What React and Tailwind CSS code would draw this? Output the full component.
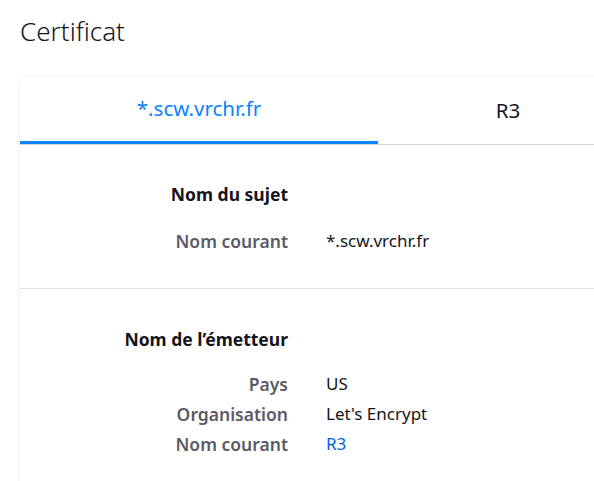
import React from "react";

const subject = [{ label: "Nom courant", value: "*.scw.vrchr.fr" }];

const issuer = [
  { label: "Pays", value: "US" },
  { label: "Organisation", value: "Let's Encrypt" },
  { label: "Nom courant", value: "R3", link: true },
];

export default function App() {
  return (
    <div
      className="w-[594px] h-[481px] overflow-hidden bg-white text-[#15141a]"
      style={{ fontFamily: '"Noto Sans", "Open Sans", sans-serif' }}
    >
      {/* TITLE */}
      <h1 className="pl-[20px] pt-[13px] text-[26px] font-light leading-[36px]">
        Certificat
      </h1>

      {/* CARD */}
      <div className="ml-[20px] mt-[28px] w-[618px] bg-white shadow-[0_0_6px_rgba(0,0,0,0.08)]">
        {/* TABS */}
        <div className="flex border-b border-[#cfcfd8]">
          <div className="w-[358px] h-[67px] flex items-center justify-center border-b-[3px] border-[#0a84ff] text-[20.5px] text-[#0a84ff] pb-[1px]">
            *.scw.vrchr.fr
          </div>
          <div className="flex-1 h-[67px] flex items-center justify-center text-[20.5px] pb-[1px]">
            R3
          </div>
        </div>

        <div className="pt-[37px] pb-[35px]">
          <Section title="Nom du sujet" rows={subject} gap="mt-[23px]" />
        </div>
        <div className="h-px bg-[#e0e0e6]" />
        <div className="pt-[38px] pb-[35px]">
          <Section title="Nom de l’émetteur" rows={issuer} gap="mt-[21px]" />
        </div>
      </div>
    </div>
  );
}

function Section({ title, rows, gap }) {
  return (
    <div>
      <div className="flex">
        <div className="w-[268px] text-right font-bold text-[17.5px] leading-[24px]">
          {title}
        </div>
      </div>
      <div className={gap + " flex flex-col gap-[6px]"}>
        {rows.map((row) => (
          <div key={row.label} className="flex leading-[24px]">
            <div className="w-[268px] text-right font-semibold text-[17.5px] text-[#5b5b66]">
              {row.label}
            </div>
            <div
              className={
                "pl-[38px] text-[17px] " +
                (row.link ? "text-[#0061e0]" : "text-[#15141a]")
              }
            >
              {row.value}
            </div>
          </div>
        ))}
      </div>
    </div>
  );
}
